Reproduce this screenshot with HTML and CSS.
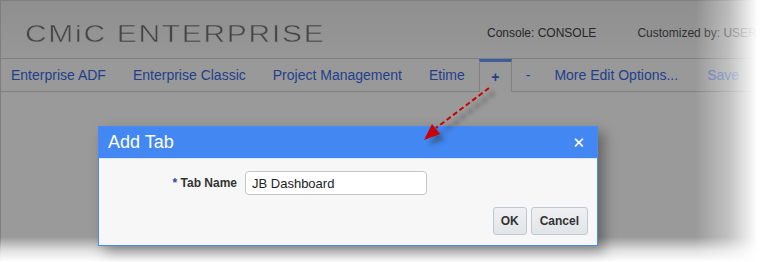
FILE: index.html
```html
<!DOCTYPE html>
<html>
<head>
<meta charset="utf-8">
<link rel="stylesheet" href="styles.css">
</head>
<body>
<div class="shot">
  <header class="top">
    <div class="logo-box"><span class="logo">CMiC ENTERPRISE</span></div>
    <div class="meta">
      <span class="console">Console: CONSOLE</span>
      <span class="custom">Customized by: USER</span>
    </div>
  </header>
  <nav class="tabs">
    <span class="tab">Enterprise ADF</span>
    <span class="tab">Enterprise Classic</span>
    <span class="tab">Project Management</span>
    <span class="tab">Etime</span>
    <span class="tab plus">+</span>
    <span class="tab minus">-</span>
    <span class="tab more">More Edit Options...</span>
    <span class="tab save">Save</span>
  </nav>
  <main class="content"></main>

  <div class="fade-right"></div>
  <div class="fade-bottom"></div>

  <svg class="arrow" width="120" height="110" viewBox="0 0 120 110">
    <defs>
      <filter id="blur" x="-20%" y="-20%" width="140%" height="140%">
        <feGaussianBlur stdDeviation="2"/>
      </filter>
    </defs>
    <g filter="url(#blur)" opacity="0.45">
      <line x1="74" y1="11" x2="22" y2="51" stroke="#333" stroke-width="3" stroke-dasharray="6 3"/>
      <polygon points="9,63 25,58 17,48" fill="#333"/>
    </g>
    <line x1="69" y1="6" x2="16" y2="46" stroke="#cc0000" stroke-width="2" stroke-dasharray="5 3"/>
    <polygon points="4,58 20,52 12,42" fill="#cc0000"/>
  </svg>

  <section class="dialog">
    <div class="dlg-head">
      <span class="dlg-title">Add Tab</span>
      <span class="dlg-close">✕</span>
    </div>
    <div class="dlg-body">
      <div class="field">
        <label class="lbl"><span class="req">*</span> Tab Name</label>
        <div class="input">JB Dashboard</div>
      </div>
      <div class="actions">
        <button class="btn ok">OK</button>
        <button class="btn">Cancel</button>
      </div>
    </div>
  </section>
</div>
</body>
</html>
```

FILE: styles.css
```css
html, body {
  margin: 0;
  padding: 0;
  background: #ffffff;
}
body {
  width: 763px;
  height: 262px;
  overflow: hidden;
  font-family: "Liberation Sans", Arial, sans-serif;
}
.shot {
  position: relative;
  width: 763px;
  height: 262px;
  display: flex;
  flex-direction: column;
  background: #9a9a9a;
  border-top: 1px solid #7e7e7e;
  border-left: 1px solid #7e7e7e;
  box-sizing: border-box;
}
.top {
  height: 57px;
  display: flex;
  align-items: center;
  background: linear-gradient(#8f8f8f, #979797);
  border-bottom: 1px solid #7f7f7f;
  padding-left: 24px;
}
.logo-box {
  width: 462px;
  flex: none;
  margin-top: 8px;
}
.logo {
  display: inline-block;
  font-size: 24px;
  letter-spacing: 1.35px;
  color: #464646;
  transform: scaleX(1.25);
  transform-origin: left center;
  -webkit-text-stroke: 0.5px #939393;
}
.meta {
  display: flex;
  gap: 41px;
  margin-top: 6px;
  font-size: 12px;
  color: #262626;
  white-space: nowrap;
}
.custom { color: #2e2e2e; }
.tabs {
  height: 32px;
  display: flex;
  align-items: stretch;
  gap: 27px;
  padding-left: 10px;
  background: #999999;
  border-bottom: 1px solid #7f7f7f;
  font-size: 14px;
  color: #223f8c;
  white-space: nowrap;
}
.tab {
  display: flex;
  align-items: center;
}
.tab.plus {
  width: 33px;
  justify-content: center;
  margin-left: -13px;
  border-top: 3px solid #3d5d9e;
  border-left: 1px solid #808080;
  border-right: 1px solid #808080;
  margin-bottom: -1px;
  background: #999999;
  font-weight: bold;
  box-sizing: border-box;
  padding-bottom: 1px;
}
.tab.minus { margin-left: -13px; }
.tab.more { margin-left: -3px; }
.tab.save { color: #4d6cab; margin-left: 2px; }
.content { flex: 1; }

.fade-right {
  position: absolute;
  top: -1px;
  right: 0;
  bottom: 0;
  width: 68px;
  background: linear-gradient(to right, rgba(255,255,255,0), rgba(255,255,255,0.4) 50%, #ffffff 92%);
}
.fade-bottom {
  position: absolute;
  left: -1px;
  right: 0;
  bottom: 0;
  height: 25px;
  background: linear-gradient(rgba(255,255,255,0), rgba(255,255,255,0.7) 55%, #ffffff);
}

.arrow {
  position: absolute;
  left: 419px;
  top: 81px;
  z-index: 2;
}

.dialog {
  position: absolute;
  left: 97px;
  top: 125px;
  width: 500px;
  height: 120px;
  box-sizing: border-box;
  border: 1px solid #4a8af4;
  background: #f7f7f7;
  box-shadow: 6px 6px 12px rgba(0,0,0,0.35);
  display: flex;
  flex-direction: column;
  z-index: 1;
}
.dlg-head {
  height: 31px;
  background: #4287f2;
  display: flex;
  align-items: center;
  justify-content: space-between;
  padding: 0 12px 0 9px;
  color: #ffffff;
  flex: none;
}
.dlg-title {
  font-size: 18px;
  font-family: "Liberation Sans", Arial, sans-serif;
}
.dlg-close {
  font-size: 15px;
  font-weight: bold;
  font-family: "DejaVu Sans", sans-serif;
}
.dlg-body {
  flex: 1;
  display: flex;
  flex-direction: column;
  padding: 12px 9px 0 0;
  border-top: 1px solid #dbe6f8;
}
.field {
  display: flex;
  align-items: center;
  gap: 8px;
}
.lbl {
  width: 138px;
  text-align: right;
  font-size: 12px;
  font-weight: bold;
  color: #333333;
}
.req { color: #2a4d9a; }
.input {
  width: 182px;
  height: 24px;
  box-sizing: border-box;
  border: 1px solid #c6c6c6;
  border-radius: 4px;
  background: #ffffff;
  font-size: 13px;
  color: #222222;
  padding-left: 6px;
  display: flex;
  align-items: center;
}
.actions {
  display: flex;
  justify-content: flex-end;
  gap: 4px;
  margin-top: 12px;
}
.btn {
  height: 28px;
  box-sizing: border-box;
  border: 1px solid #c2c8d0;
  border-radius: 3px;
  background: linear-gradient(#eef0f2, #e2e5e8);
  font-family: "Liberation Sans", Arial, sans-serif;
  font-size: 12px;
  font-weight: bold;
  color: #333333;
  padding: 0 8px;
}
.btn.ok { width: 34px; padding: 0; }
```
